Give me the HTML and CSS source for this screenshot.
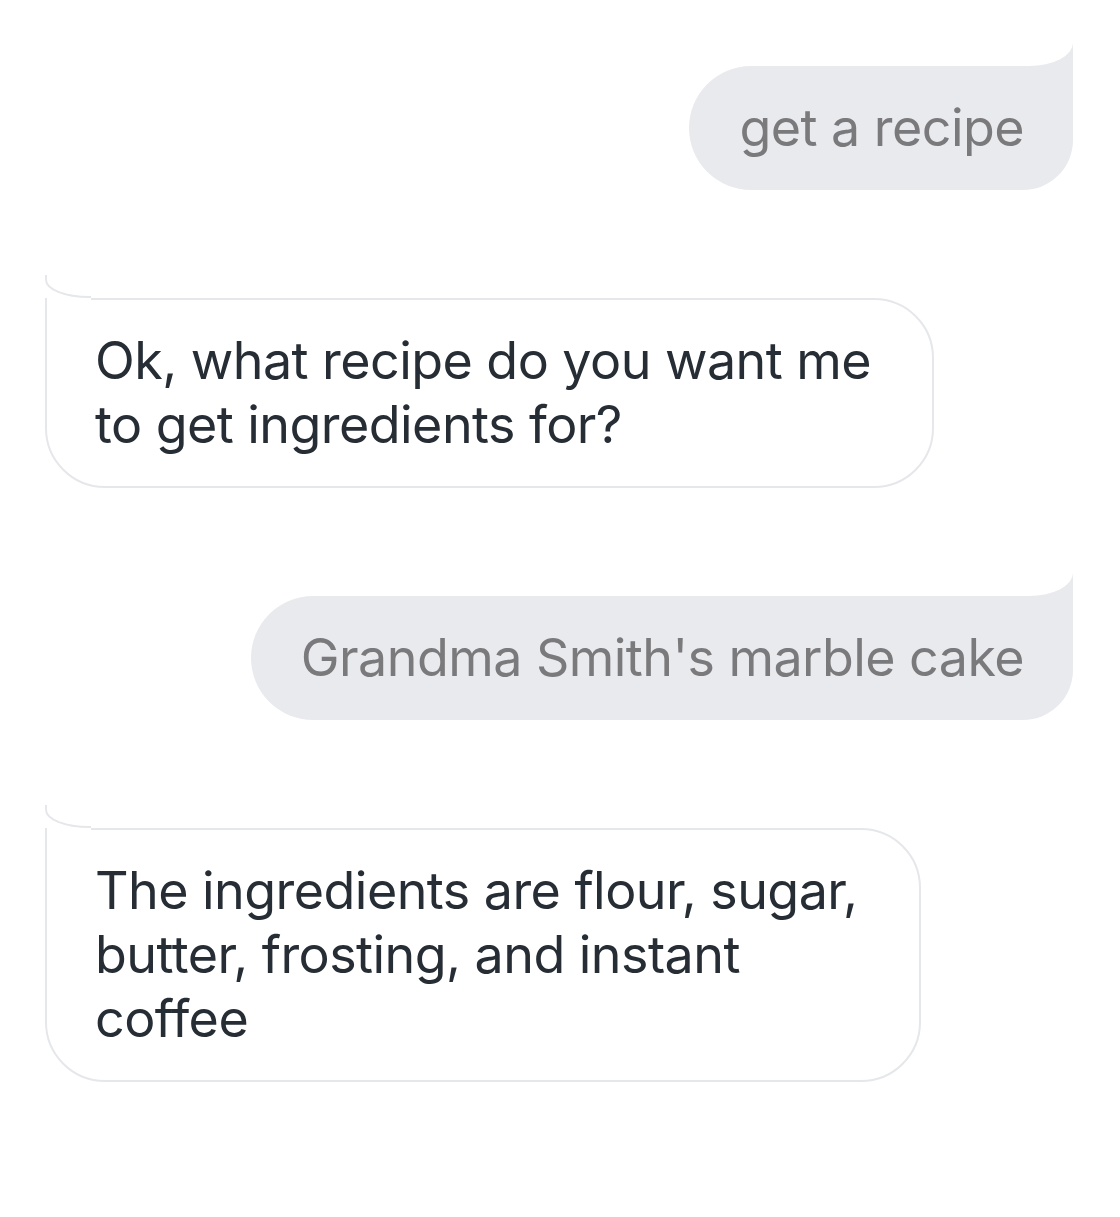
FILE: index.html
```html
<!DOCTYPE html>
<html lang="en">
<head>
<meta charset="utf-8">
<title>Chat</title>
<link rel="stylesheet" href="styles.css">
</head>
<body>
<main class="chat">
  <div class="msg msg-user"><p class="bubble bubble-user">get a recipe</p></div>
  <div class="msg msg-bot"><p class="bubble bubble-bot">Ok, what recipe do you want me<br>to get ingredients for?</p></div>
  <div class="msg msg-user"><p class="bubble bubble-user">Grandma Smith's marble cake</p></div>
  <div class="msg msg-bot"><p class="bubble bubble-bot">The ingredients are flour, sugar,<br>butter, frosting, and instant<br>coffee</p></div>
</main>
</body>
</html>
```

FILE: styles.css
```css
html, body {
  margin: 0;
  padding: 0;
  background: #ffffff;
}

body {
  font-family: Inter, "Noto Sans", "Liberation Sans", sans-serif;
  -webkit-font-smoothing: antialiased;
}

.chat {
  display: flex;
  flex-direction: column;
  gap: 108px;
  padding: 66px 47px 0 45px;
}

.msg {
  display: flex;
}

.msg-user {
  justify-content: flex-end;
}

.msg-bot {
  justify-content: flex-start;
}

.bubble {
  position: relative;
  margin: 0;
  font-size: 52px;
  line-height: 64px;
  letter-spacing: -0.55px;
  white-space: nowrap;
}

.bubble-user {
  background: #e9eaee;
  color: #7a7a7c;
  padding: 30px 49px 30px 50px;
  border-radius: 62px 0 50px 62px;
}

.bubble-user::before,
.bubble-user::after {
  content: "";
  position: absolute;
  right: 0;
  top: -23px;
  width: 44px;
  height: 23px;
}

.bubble-user::before {
  background: #e9eaee;
}

.bubble-user::after {
  background: #ffffff;
  border-bottom-right-radius: 44px 23px;
}

.bubble-bot {
  background: #ffffff;
  color: #262d35;
  border: 2px solid #e6e7eb;
  padding: 29px 61px 29px 48px;
  border-radius: 0 60px 60px 60px;
}

.bubble-bot::before {
  content: "";
  position: absolute;
  left: 0;
  top: -2px;
  width: 44px;
  height: 2px;
  background: #ffffff;
}

.bubble-bot::after {
  content: "";
  position: absolute;
  left: -2px;
  top: -25px;
  width: 44px;
  height: 21px;
  border-left: 2px solid #e6e7eb;
  border-bottom: 2px solid #e6e7eb;
  border-bottom-left-radius: 44px 18px;
}
```
